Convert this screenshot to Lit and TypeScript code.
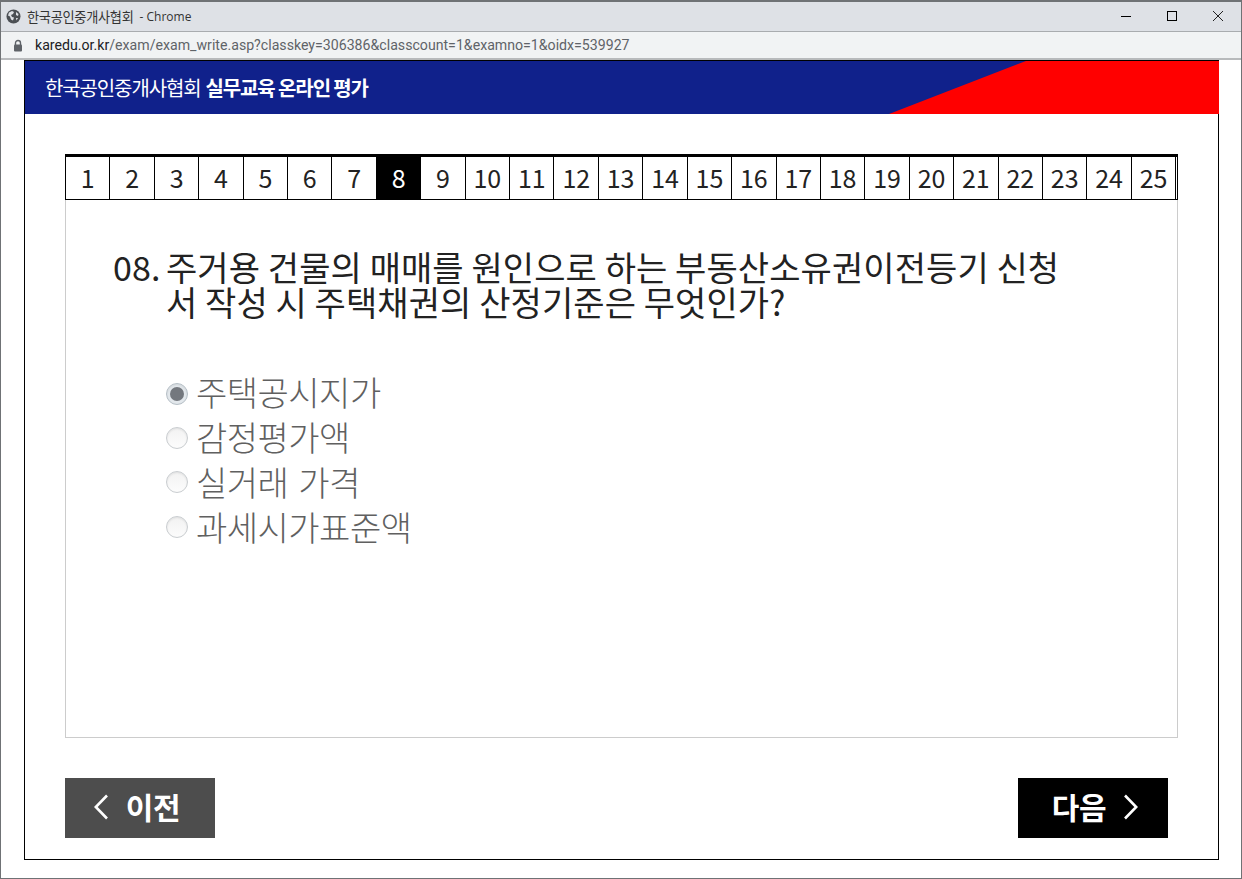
import { LitElement, html, css } from "lit";
import { customElement, state } from "lit/decorators.js";

const FONT = css`"Noto Sans CJK KR", "Noto Sans", sans-serif`;

@customElement("app-root")
export class AppRoot extends LitElement {
  @state() current = 8;
  @state() choice = 0;

  options = ["주택공시지가", "감정평가액", "실거래 가격", "과세시가표준액"];

  static styles = css`
    :host {
      display: block;
      width: 1242px;
      height: 879px;
      box-sizing: border-box;
      border: 1px solid #6f7275;
      border-top-width: 2px;
      overflow: hidden;
      background: #fff;
      font-family: ${FONT};
    }
    * {
      box-sizing: border-box;
    }
    .titlebar {
      height: 30px;
      background: #dee1e6;
      display: flex;
      align-items: center;
      padding-left: 5px;
      font-size: 13.2px;
      letter-spacing: -0.3px;
      color: #333;
      border-bottom: 1px solid #a9acaf;
    }
    .titlebar .globe {
      margin-right: 6px;
    }
    .titlebar .sep {
      margin-left: 6px;
      font-family: "Open Sans", sans-serif;
      font-size: 12px;
      letter-spacing: 0;
    }
    .winbtns {
      margin-left: auto;
      display: flex;
      align-items: center;
      gap: 34px;
      padding-right: 17px;
      margin-bottom: 2px;
    }
    .winbtns svg {
      display: block;
    }
    .addressbar {
      height: 28px;
      background: #f1f3f4;
      border-bottom: 2px solid #b8babc;
      display: flex;
      align-items: center;
      padding-left: 12px;
      font-family: "Roboto", sans-serif;
      font-size: 14.15px;
      color: #5f6368;
    }
    .addressbar svg {
      margin-right: 12px;
    }
    .addressbar b {
      font-weight: 400;
      color: #202124;
    }
    .frame {
      margin-left: 23px;
      width: 1195px;
      height: 800px;
      border: 1px solid #000;
      background: #fff;
    }
    .banner {
      position: relative;
      height: 53px;
      margin-right: -1px;
      background: #10218b;
      color: #fff;
      display: flex;
      align-items: center;
      padding-left: 20px;
      font-size: 20px;
      letter-spacing: -1.12px;
      overflow: hidden;
    }
    .banner b {
      font-weight: 700;
      margin-left: 5px;
    }
    .banner svg {
      position: absolute;
      right: 0;
      top: 0;
    }
    .content {
      padding: 40px 40px 0 40px;
    }
    .tabs {
      display: grid;
      grid-template-columns: repeat(25, 44.42px) 1fr;
      width: 1113px;
      height: 46px;
      border-top: 3px solid #000;
      border-bottom: 1px solid #000;
      border-left: 1px solid #000;
      border-right: 1px solid #000;
    }
    .tab {
      display: flex;
      align-items: center;
      justify-content: center;
      border-right: 1px solid #000;
      font-size: 25px;
      color: #222;
      letter-spacing: -0.1px;
      padding-bottom: 2px;
    }
    .tab.on {
      background: #000;
      color: #fff;
    }
    .panel {
      width: 1113px;
      height: 538px;
      border: 1px solid #ccc;
      border-top: 0;
      padding: 49px 47px 0;
    }
    .question {
      display: flex;
      font-size: 34px;
      line-height: 35px;
      letter-spacing: 0.09px;
      color: #222;
      width: 960px;
    }
    .question .no {
      flex: none;
      width: 53px;
    }
    .question .text {
      word-break: break-all;
    }
    .answers {
      margin-top: 52px;
      padding-left: 53px;
      display: flex;
      flex-direction: column;
    }
    .answer {
      display: flex;
      align-items: center;
      height: 45px;
      font-size: 34px;
      letter-spacing: -0.5px;
      word-spacing: 3px;
      color: #606060;
      font-weight: 300;
    }
    .answer .label {
      margin-bottom: 4px;
    }
    .radio {
      width: 22px;
      height: 22px;
      border-radius: 50%;
      border: 1px solid #c9cdd0;
      background: linear-gradient(#f2f2f2, #fcfcfc);
      margin-right: 8px;
      display: flex;
      align-items: center;
      justify-content: center;
      box-shadow: inset 0 1px 2px rgba(0, 0, 0, 0.08);
    }
    .answer:nth-child(2) .radio {
      margin-bottom: 2px;
    }
    .answer:nth-child(3) .radio {
      margin-bottom: 3px;
    }
    .answer:nth-child(4) .radio {
      margin-bottom: 4px;
    }
    .radio.on {
      background: #e3e8ec;
      border-color: #b6bfc6;
    }
    .radio.on::after {
      content: "";
      width: 14px;
      height: 14px;
      border-radius: 50%;
      background: #74787e;
    }
    .actions {
      display: flex;
      justify-content: space-between;
      padding-right: 10px;
      margin-top: 40px;
    }
    .btn {
      width: 150px;
      height: 60px;
      border: 0;
      padding: 0;
      color: #fff;
      background: #000;
      display: flex;
      align-items: center;
      justify-content: center;
      gap: 18px;
      font-family: inherit;
      font-size: 30px;
      font-weight: 700;
      letter-spacing: -0.3px;
      cursor: pointer;
    }
    .btn span {
      margin-bottom: 4px;
    }
    .btn svg {
      margin-bottom: 2px;
    }
    .btn.prev {
      background: #4d4d4d;
      padding-right: 6px;
    }
    .btn.next {
      padding-left: 4px;
    }
  `;

  render() {
    const tabs = Array.from({ length: 25 }, (_, i) => i + 1);
    return html`
      <div class="titlebar">
        <svg class="globe" width="15" height="15" viewBox="0 0 15 15">
          <circle cx="7.5" cy="7.5" r="7" fill="#4b4f54" />
          <path d="M3 3.5l3-1.5 2 1-1 2 -2 1 1 2 2 .5 -1 3 -2-1 -1-3 -2-1z" fill="#dee1e6" />
          <path d="M10 3l2.5 2-.5 2-2-1z M10 9l2 0-1.5 2.5z" fill="#dee1e6" />
        </svg>
        <span>한국공인중개사협회</span><span class="sep">- Chrome</span>
        <div class="winbtns">
          <svg width="12" height="12" viewBox="0 0 12 12"><path d="M1 6.5h10" stroke="#000" /></svg>
          <svg width="12" height="12" viewBox="0 0 12 12"><rect x="1.5" y="1.5" width="9" height="9" fill="none" stroke="#000" /></svg>
          <svg width="12" height="12" viewBox="0 0 12 12"><path d="M1 1l10 10M11 1L1 11" stroke="#222" /></svg>
        </div>
      </div>
      <div class="addressbar">
        <svg width="10" height="13" viewBox="0 0 10 13">
          <path d="M2.5 6V4a2.5 2.5 0 0 1 5 0v2" fill="none" stroke="#5f6368" stroke-width="1.4" />
          <rect x="1" y="5.5" width="8" height="7" rx="1" fill="#5f6368" />
        </svg>
        <span><b>karedu.or.kr</b>/exam/exam_write.asp?classkey=306386&classcount=1&examno=1&oidx=539927</span>
      </div>
      <div class="frame">
        <div class="banner">
          <span>한국공인중개사협회</span><b>실무교육 온라인 평가</b>
          <svg width="330" height="53" viewBox="0 0 330 53">
            <polygon points="137,0 330,0 330,53 0,53" fill="#f00" />
          </svg>
        </div>
        <div class="content">
          <div class="tabs">
            ${tabs.map(
              (n) => html`<div class="tab ${n === this.current ? "on" : ""}">${n}</div>`
            )}
            <div></div>
          </div>
          <div class="panel">
            <div class="question">
              <span class="no">08.</span>
              <span class="text">주거용 건물의 매매를 원인으로 하는 부동산소유권이전등기 신청서 작성 시 주택채권의 산정기준은 무엇인가?</span>
            </div>
            <div class="answers">
              ${this.options.map(
                (o, i) => html`<div class="answer">
                  <span class="radio ${i === this.choice ? "on" : ""}"></span><span class="label">${o}</span>
                </div>`
              )}
            </div>
          </div>
          <div class="actions">
            <button class="btn prev">
              <svg width="14" height="26" viewBox="0 0 14 26"><path d="M13 1.5L1.8 13l11.2 11.5" fill="none" stroke="#fff" stroke-width="2.6" /></svg>
              <span>이전</span>
            </button>
            <button class="btn next">
              <span>다음</span>
              <svg width="14" height="26" viewBox="0 0 14 26"><path d="M1 1.5L12.2 13 1 24.5" fill="none" stroke="#fff" stroke-width="2.6" /></svg>
            </button>
          </div>
        </div>
      </div>
    `;
  }
}
